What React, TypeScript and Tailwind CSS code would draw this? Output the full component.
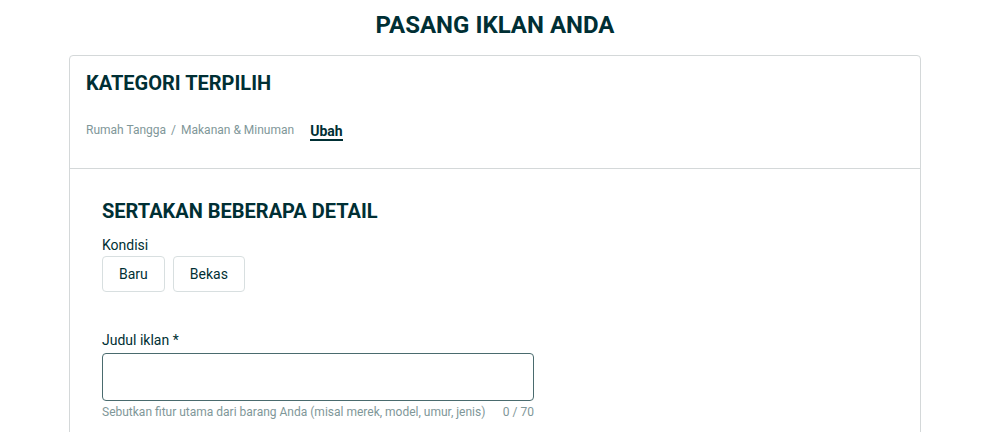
import React from 'react';

const CONDITIONS = ['Baru', 'Bekas'];

export default function App() {
  return (
    <div className="min-h-screen bg-white font-['Roboto',sans-serif] text-[#002f34]">
      <div className="flex flex-col items-center pl-1">
        <h1 className="mt-[9px] text-2xl leading-8 font-bold">PASANG IKLAN ANDA</h1>

        <div className="mt-[14px] w-[852px] rounded border border-[#d4d8d9]">
          {/* Selected category */}
          <section className="border-b border-[#d4d8d9] px-4 pt-[15px] pb-[27px]">
            <h2 className="text-xl leading-6 font-bold">KATEGORI TERPILIH</h2>
            <div className="mt-[27px] flex h-[19px] items-end">
              <span className="self-start text-xs leading-4 text-[#7f9799]">
                Rumah Tangga<span className="mx-[5px]">/</span>Makanan &amp; Minuman
              </span>
              <span className="ml-4 border-b-2 border-[#002f34] text-sm leading-4 font-bold">Ubah</span>
            </div>
          </section>

          {/* Details */}
          <section className="px-8 pt-[30px] pb-4">
            <h2 className="text-xl leading-6 font-bold">SERTAKAN BEBERAPA DETAIL</h2>
            <div className="mt-[12px] text-sm leading-5">Kondisi</div>
            <div className="mt-[1px] flex gap-2">
              {CONDITIONS.map((c) => (
                <button
                  key={c}
                  className="h-9 rounded border border-[#d8dfe0] px-4 text-sm"
                >
                  {c}
                </button>
              ))}
            </div>

            <div className="mt-[38px] text-sm leading-5">Judul iklan *</div>
            <div className="mt-[3px] w-[432px]">
              <input className="h-12 w-full rounded border border-[#4a6b6e] px-3 outline-none" />
              <div className="mt-[3px] flex justify-between text-xs leading-4 text-[#7f9799]">
                <span>Sebutkan fitur utama dari barang Anda (misal merek, model, umur, jenis)</span>
                <span>0 / 70</span>
              </div>
            </div>
          </section>
        </div>
      </div>
    </div>
  );
}
